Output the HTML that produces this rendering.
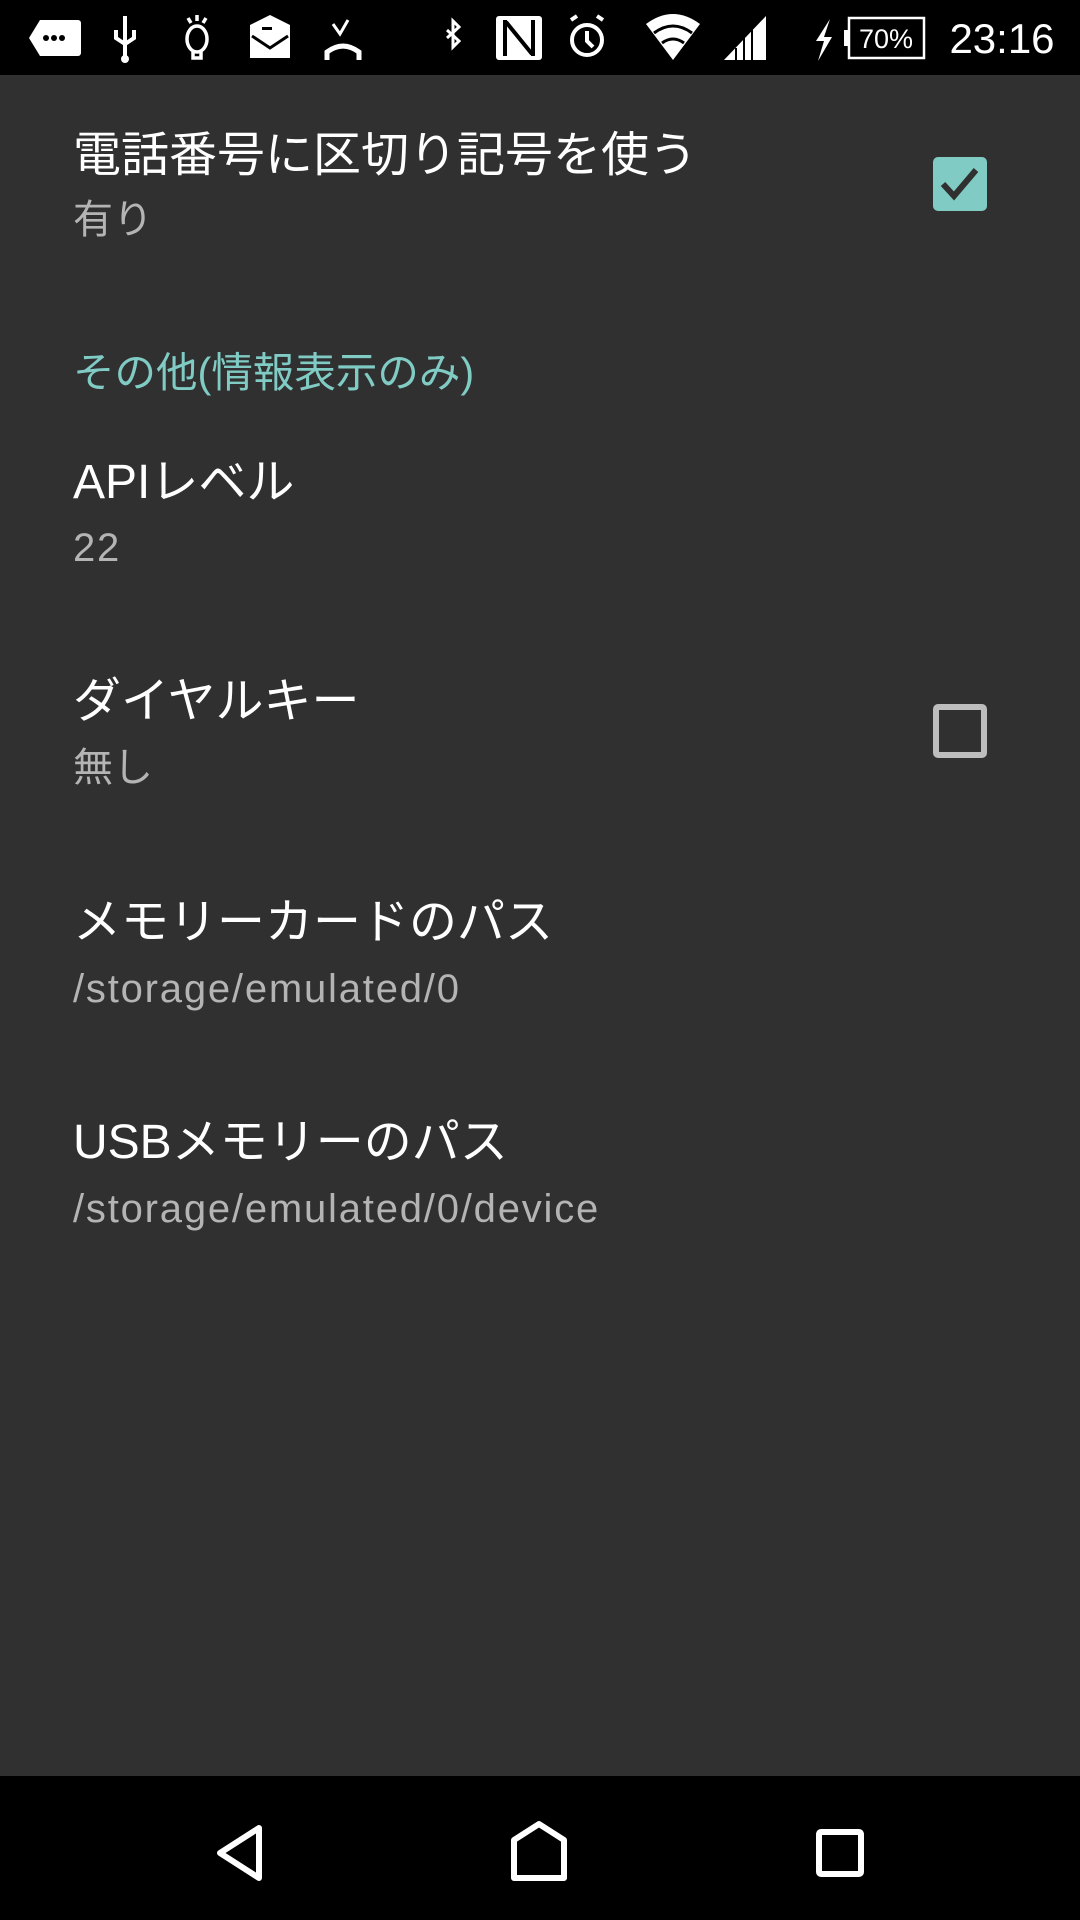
<!DOCTYPE html>
<html><head><meta charset="utf-8"><style>
html,body{margin:0;padding:0;width:1080px;height:1920px;overflow:hidden;background:#303030;font-family:"Liberation Sans","Noto Sans CJK JP",sans-serif;}
.sb{position:absolute;left:0;top:0;width:1080px;height:75px;background:#000;}
.nav{position:absolute;left:0;top:1776px;width:1080px;height:144px;background:#000;}
.t{position:absolute;left:73px;color:#fff;font-size:48px;line-height:1;white-space:nowrap;}
.s{position:absolute;left:73px;color:#b4b4b4;font-size:40px;line-height:1;white-space:nowrap;}
.s.l{letter-spacing:1.8px;}
.c{position:absolute;left:73px;color:#80cbc4;font-size:41.5px;line-height:1;white-space:nowrap;}
.cb{position:absolute;left:933px;width:54px;height:54px;box-sizing:border-box;border-radius:5px;}
</style></head><body>
<div class="sb">
<svg width="1080" height="75" style="position:absolute;left:0;top:0" fill="#fff" stroke="none">
<path d="M40 20 h38 a3 3 0 0 1 3 3 v30 a3 3 0 0 1 -3 3 h-38 l-11 -18z"/>
<circle cx="46" cy="38" r="3" fill="#000"/><circle cx="54" cy="38" r="3" fill="#000"/><circle cx="62" cy="38" r="3" fill="#000"/>
<g stroke="#fff" stroke-width="4" fill="none"><path d="M125 16 v44 M116 30 v8 l9 6 l9 -6 v-8"/></g><circle cx="125" cy="59" r="4"/>
<g stroke="#fff" stroke-width="3.5" fill="none"><ellipse cx="197" cy="39" rx="10" ry="13"/><path d="M193 52 v6 h8 v-6 M188 18 l3 5 M197 15 v6 M206 18 l-3 5"/></g>
<path d="M250 25 l20 -10 l20 10 v33 h-40z"/><path d="M252 36 l18 12 l18 -12" stroke="#000" stroke-width="3" fill="none"/><rect x="262" y="27" width="10" height="3" fill="#000"/>
<g stroke="#fff" stroke-width="5" fill="none"><path d="M327 60 v-8 q16 -12 32 0 v8"/></g><path d="M333 24 l7 10 l8 -14" stroke="#fff" stroke-width="3" fill="none"/>
<path d="M447 22 l12 11 l-6 6 v-26 l6 6 l-12 11" stroke="#fff" stroke-width="3" fill="none" transform="translate(0,8)"/>
<rect x="496" y="16" width="46" height="44" rx="3"/><path d="M505 20 v36 M533 20 v36 M506 22 l26 32" stroke="#000" stroke-width="4"/>
<g stroke="#fff" stroke-width="4" fill="none"><circle cx="587" cy="40" r="15"/><path d="M587 31 v10 l6 6 M571 20 l6 -4 M603 20 l-6 -4"/></g>
<path d="M646 24 q27 -20 54 0 l-27 36z"/><path d="M654 33 q19 -14 38 0 M662 43 q11 -8 22 0" stroke="#000" stroke-width="3" fill="none"/>
<path d="M724 60 l42 -44 v44z"/><path d="M736 60 v-12 M744 60 v-22 M752 60 v-30" stroke="#000" stroke-width="2"/>
<path d="M830 19 l-14 22 h8 l-6 20 l14 -24 h-8z"/>
<rect x="849" y="18" width="75" height="40" fill="none" stroke="#fff" stroke-width="2.5"/><rect x="844" y="30" width="5" height="16"/>
<text x="886" y="48" font-family="Liberation Sans" font-size="27" text-anchor="middle" fill="#fff">70%</text>
<text x="1002" y="53" font-family="Liberation Sans" font-size="42" text-anchor="middle" fill="#fff">23:16</text>
</svg>
</div>

<div class="t" style="top:132px">電話番号に区切り記号を使う</div>
<div class="s" style="top:200px">有り</div>
<div class="cb" style="top:157px;background:#80cbc4"><svg width="54" height="54" style="position:absolute;left:0;top:0"><path d="M10 27 l11 12 l22 -26" stroke="#303030" stroke-width="6" fill="none"/></svg></div>

<div class="c" style="top:352px">その他(情報表示のみ)</div>

<div class="t" style="top:459px">APIレベル</div>
<div class="s l" style="top:528px">22</div>

<div class="t" style="top:678px">ダイヤルキー</div>
<div class="s" style="top:748px">無し</div>
<div class="cb" style="top:704px;border:6px solid #bdbdbd"></div>

<div class="t" style="top:899px">メモリーカードのパス</div>
<div class="s l" style="top:969px">/storage/emulated/0</div>

<div class="t" style="top:1119px">USBメモリーのパス</div>
<div class="s l" style="top:1189px">/storage/emulated/0/device</div>

<div class="nav">
<svg width="1080" height="144" style="position:absolute;left:0;top:0" fill="none" stroke="#fff" stroke-width="6" stroke-linejoin="round">
<path d="M259 52 v50 l-39 -25z"/>
<path d="M514 64 l25 -16 l25 16 v38 h-50z"/>
<rect x="819" y="56" width="42" height="42" rx="2"/>
</svg>
</div>
</body></html>
